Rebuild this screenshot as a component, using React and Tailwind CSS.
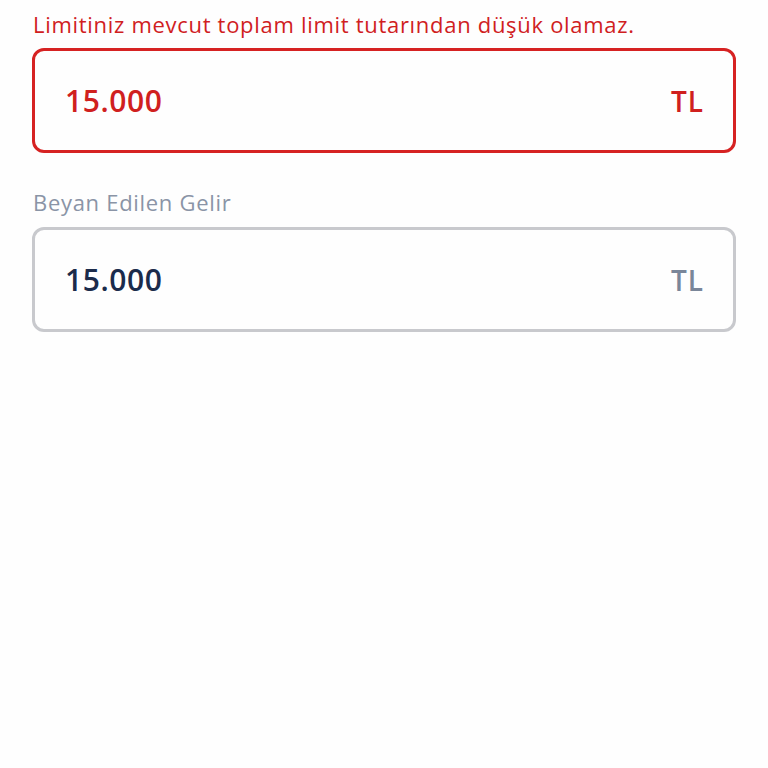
export default function App() {
  return (
    <div className="w-[768px] h-[768px] bg-[#fefefe] px-[32px] pt-[8px]" style={{ fontFamily: '"Open Sans", sans-serif' }}>
      <div className="text-[22px] leading-[32px] tracking-[0.7px] text-[#d0201e] pl-[1px] whitespace-nowrap">Limitiniz mevcut toplam limit tutarından düşük olamaz.</div>
      <div className="mt-[8px] h-[105px] border-[3px] border-[#d62222] rounded-[12px] flex items-center justify-between pl-[30px] pr-[29px]">
        <span className="text-[30px] tracking-[0.6px] font-semibold text-[#d0201e]">15.000</span>
        <span className="text-[28px] tracking-[1px] font-semibold text-[#d0201e]">TL</span>
      </div>
      <div className="mt-[33px] text-[22px] leading-[32px] tracking-[0.7px] text-[#8a94a6] pl-[1px]">Beyan Edilen Gelir</div>
      <div className="mt-[9px] h-[105px] border-[3px] border-[#c8c9cd] rounded-[12px] flex items-center justify-between pl-[30px] pr-[29px]">
        <span className="text-[30px] tracking-[0.6px] font-semibold text-[#1b2b4b]">15.000</span>
        <span className="text-[28px] tracking-[1px] font-semibold text-[#7a8699]">TL</span>
      </div>
    </div>
  );
}
